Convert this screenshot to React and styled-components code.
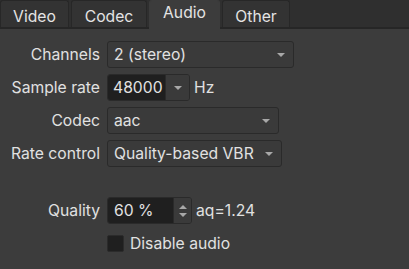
import React from "react";
import styled, { createGlobalStyle } from "styled-components";

const GlobalStyle = createGlobalStyle`
  html, body {
    margin: 0;
    padding: 0;
    background: #3c3c3c;
  }
  body {
    font-family: Inter, "Noto Sans", sans-serif;
    font-size: 15.7px;
    color: #e1e1e1;
  }
`;

const Window = styled.div`
  width: 409px;
  height: 269px;
  display: flex;
  flex-direction: column;
  overflow: hidden;
  background: #3c3c3c;
`;

const TabBar = styled.div`
  display: flex;
  align-items: flex-start;
  gap: 2px;
  height: 27px;
  background: #2f2f2f;
  border-bottom: 2px solid #262626;
`;

const Tab = styled.div`
  box-sizing: border-box;
  height: ${(p) => (p.$active ? "29px" : "27px")};
  width: ${(p) => p.$w}px;
  display: flex;
  justify-content: center;
  align-items: center;
  padding-top: ${(p) => (p.$active ? "0" : "4px")};
  padding-bottom: ${(p) => (p.$active ? "5px" : "0")};
  background: ${(p) => (p.$active ? "#3c3c3c" : "#333333")};
  border: 1px solid ${(p) => (p.$active ? "#3c3c3c" : "#272727")};
  border-bottom: none;
  border-radius: 3px 3px 0 0;
  color: #e4e4e4;
  z-index: 1;
`;

const Form = styled.div`
  display: grid;
  grid-template-columns: 100px auto;
  column-gap: 7px;
  row-gap: 6px;
  padding-top: 12px;
  align-items: center;
`;

const Label = styled.div`
  text-align: right;
  white-space: nowrap;
`;

const Field = styled.div`
  display: flex;
  align-items: center;
  gap: 4px;
`;

const Spacer = styled.div`
  grid-column: 1 / -1;
  height: ${(p) => p.$h}px;
`;

const Combo = styled.div`
  box-sizing: border-box;
  width: ${(p) => p.$w}px;
  height: 27px;
  display: flex;
  align-items: center;
  justify-content: space-between;
  padding: 0 8px 0 6px;
  background: #3a3a3a;
  border: 1px solid #2a2a2a;
  border-radius: 3px;
`;

const Arrow = styled.span`
  width: 0;
  height: 0;
  border-left: 4.5px solid transparent;
  border-right: 4.5px solid transparent;
  border-${(p) => (p.$up ? "bottom" : "top")}: 4.5px solid #a8a8a8;
`;

const SpinBox = styled.div`
  box-sizing: border-box;
  width: ${(p) => p.$w}px;
  height: 27px;
  display: flex;
  border: 1px solid #2a2a2a;
  border-radius: 3px;
  overflow: hidden;
`;

const Edit = styled.div`
  flex: 1;
  display: flex;
  align-items: center;
  padding-left: ${(p) => p.$pad}px;
  background: #1f1f1f;
`;

const DropButton = styled.div`
  width: ${(p) => p.$w}px;
  display: flex;
  flex-direction: column;
  align-items: center;
  justify-content: center;
  gap: 4px;
  background: #3a3a3a;
  border-left: 1px solid #2a2a2a;
`;

const Check = styled.div`
  width: 17px;
  height: 17px;
  box-sizing: border-box;
  background: #1f1f1f;
  border: 1px solid #2b2b2b;
  border-radius: 2px;
`;

const CheckRow = styled.div`
  grid-column: 2;
  height: 27px;
  display: flex;
  align-items: center;
  gap: 6px;
`;

export default function App() {
  return (
    <>
      <GlobalStyle />
      <Window>
        <TabBar>
          <Tab $w={69}>Video</Tab>
          <Tab $w={76}>Codec</Tab>
          <Tab $w={71} $active>Audio</Tab>
          <Tab $w={68}>Other</Tab>
        </TabBar>
        <Form>
          <Label>Channels</Label>
          <Field>
            <Combo $w={187}>
              2 (stereo)
              <Arrow />
            </Combo>
          </Field>

          <Label>Sample rate</Label>
          <Field>
            <SpinBox $w={83}>
              <Edit $pad={5}>48000</Edit>
              <DropButton $w={23}>
                <Arrow />
              </DropButton>
            </SpinBox>
            <span>Hz</span>
          </Field>

          <Label>Codec</Label>
          <Field>
            <Combo $w={172}>
              aac
              <Arrow />
            </Combo>
          </Field>

          <Label>Rate control</Label>
          <Field>
            <Combo $w={175}>
              Quality-based VBR
              <Arrow />
            </Combo>
          </Field>

          <Spacer $h={18} />

          <Label>Quality</Label>
          <Field>
            <SpinBox $w={85}>
              <Edit $pad={6}>60 %</Edit>
              <DropButton $w={17}>
                <Arrow $up />
                <Arrow />
              </DropButton>
            </SpinBox>
            <span>aq=1.24</span>
          </Field>

          <CheckRow>
            <Check />
            <span>Disable audio</span>
          </CheckRow>
        </Form>
      </Window>
    </>
  );
}
